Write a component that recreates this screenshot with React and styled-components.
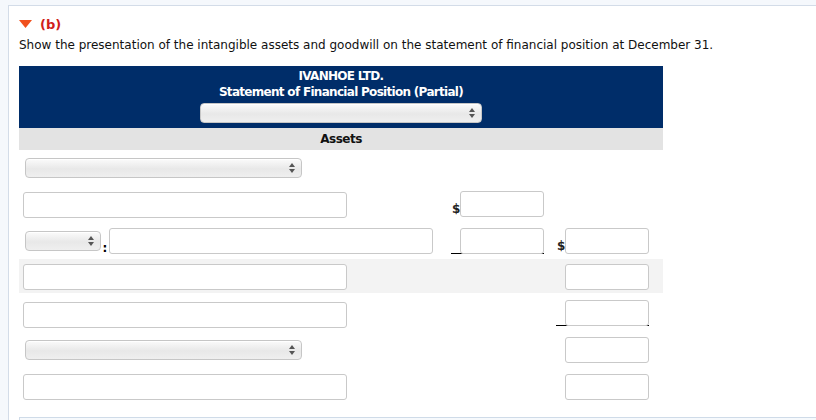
import React from "react";
import styled, { createGlobalStyle } from "styled-components";

const GlobalStyle = createGlobalStyle`
  html, body {
    margin: 0;
    padding: 0;
    background: #f5f8fc;
    font-family: "DejaVu Sans", Verdana, sans-serif;
  }
`;

const Panel = styled.div`
  margin: 5px 0 0 8px;
  border-top: 1px solid #d3dce8;
  border-left: 1px solid #d3dce8;
  background: #fff;
  padding: 10px 10px 0 10px;
`;

const PartTitle = styled.div`
  display: flex;
  align-items: center;
  gap: 8px;
  height: 16px;
  font-size: 13px;
  font-weight: bold;
  color: #d0201a;
`;

const Prompt = styled.p`
  margin: 4px 0 12px;
  font-size: 12px;
  line-height: 18px;
  color: #111;
`;

const Sheet = styled.div`
  width: 644px;
`;

const Header = styled.div`
  background: #002d69;
  color: #fff;
  text-align: center;
  padding: 2px 0 5px;
  font-size: 12px;
  font-weight: bold;
  line-height: 16px;
  letter-spacing: -0.7px;
  display: flex;
  flex-direction: column;
  align-items: center;
`;

const SubHeader = styled.div`
  background: #e3e3e3;
  height: 22px;
  line-height: 22px;
  text-align: center;
  font-size: 12px;
  font-weight: bold;
  letter-spacing: -0.5px;
  color: #111;
`;

const Row = styled.div`
  display: grid;
  grid-template-columns: 428px 106px 110px;
  align-items: center;
  height: ${(p) => p.$h}px;
  background: ${(p) => (p.$shaded ? "#f3f3f3" : "transparent")};
`;

const Cell = styled.div`
  display: flex;
  align-items: center;
  padding-left: ${(p) => p.$pad || 0}px;
`;

const SelectBox = styled.div`
  width: ${(p) => p.$w}px;
  height: 20px;
  box-sizing: border-box;
  border: 1px solid #c6c6c6;
  border-radius: 4px;
  background: linear-gradient(#fbfbfb, #e8e8e8 55%, #efefef);
  box-shadow: inset 0 1px 0 #fff;
  display: flex;
  align-items: center;
  justify-content: flex-end;
  padding-right: 6px;
  margin-left: ${(p) => p.$ml || 0}px;
  margin-top: ${(p) => p.$mt || 0}px;
`;

const TextBox = styled.div`
  width: ${(p) => p.$w}px;
  height: 26px;
  box-sizing: border-box;
  border: 1px solid #c9c9c9;
  border-radius: 3px;
  background: #fff;
  margin-left: ${(p) => p.$ml || 0}px;
  margin-top: ${(p) => p.$mt || 0}px;
`;

const Dollar = styled.span`
  font-size: 12px;
  font-weight: bold;
  color: #222;
  width: 8px;
  align-self: flex-end;
  line-height: 14px;
  margin-bottom: 1px;
`;

const Colon = styled.span`
  font-size: 12px;
  font-weight: bold;
  width: 8px;
  text-align: center;
  align-self: flex-end;
  line-height: 12px;
`;

const Underlined = styled.div`
  display: flex;
  align-items: flex-end;
  padding-left: 9px;
  border-bottom: 1px solid #000;
  margin-left: ${(p) => p.$ml || 0}px;
  width: fit-content;
  position: relative;
  top: ${(p) => p.$top || 0}px;

  & > div {
    margin-bottom: -1px;
    position: relative;
  }
`;

const Arrows = () => (
  <svg width="6" height="10" viewBox="0 0 6 10">
    <path d="M3 0 L6 4 L0 4 Z" fill="#555" />
    <path d="M3 10 L6 6 L0 6 Z" fill="#555" />
  </svg>
);

const Select = ({ w, ml, mt }) => (
  <SelectBox $w={w} $ml={ml} $mt={mt}>
    <Arrows />
  </SelectBox>
);

const BottomPanel = styled.div`
  margin: 12px -10px 0 0;
  height: 10px;
  border-top: 1px solid #cfdbe8;
  border-left: 1px solid #cfdbe8;
  background: #f6f9fc;
`;

export default function App() {
  return (
    <>
      <GlobalStyle />
      <Panel>
        <PartTitle>
          <svg width="13" height="8" viewBox="0 0 13 8">
            <path d="M0 0 L13 0 L6.5 8 Z" fill="#f0501e" />
          </svg>
          (b)
        </PartTitle>
        <Prompt>
          Show the presentation of the intangible assets and goodwill on the statement of financial position at December 31.
        </Prompt>
        <Sheet>
          <Header>
            <div>IVANHOE LTD.</div>
            <div>Statement of Financial Position (Partial)</div>
            <Select w={282} mt={3} />
          </Header>
          <SubHeader>Assets</SubHeader>

          <Row $h={36}>
            <Cell>
              <Select w={277} ml={6} />
            </Cell>
            <Cell />
            <Cell />
          </Row>

          <Row $h={36}>
            <Cell>
              <TextBox $w={324} $ml={4} $mt={1} />
            </Cell>
            <Cell $pad={5}>
              <Dollar>$</Dollar>
              <TextBox $w={84} />
            </Cell>
            <Cell />
          </Row>

          <Row $h={37}>
            <Cell>
              <Select w={76} ml={6} />
              <Colon>:</Colon>
              <TextBox $w={324} />
            </Cell>
            <Cell>
              <Underlined $ml={4}>
                <TextBox $w={84} />
              </Underlined>
            </Cell>
            <Cell $pad={4}>
              <Dollar>$</Dollar>
              <TextBox $w={84} />
            </Cell>
          </Row>

          <Row $h={34} $shaded>
            <Cell>
              <TextBox $w={324} $ml={4} $mt={2} />
            </Cell>
            <Cell />
            <Cell>
              <TextBox $w={84} $ml={12} $mt={2} />
            </Cell>
          </Row>

          <Row $h={38}>
            <Cell>
              <TextBox $w={324} $ml={4} $mt={5} />
            </Cell>
            <Cell />
            <Cell>
              <Underlined $ml={3} $top={1}>
                <TextBox $w={84} />
              </Underlined>
            </Cell>
          </Row>

          <Row $h={38}>
            <Cell>
              <Select w={277} ml={6} />
            </Cell>
            <Cell />
            <Cell>
              <TextBox $w={84} $ml={12} />
            </Cell>
          </Row>

          <Row $h={36}>
            <Cell>
              <TextBox $w={324} $ml={4} />
            </Cell>
            <Cell />
            <Cell>
              <TextBox $w={84} $ml={12} />
            </Cell>
          </Row>
        </Sheet>
        <BottomPanel />
      </Panel>
    </>
  );
}
